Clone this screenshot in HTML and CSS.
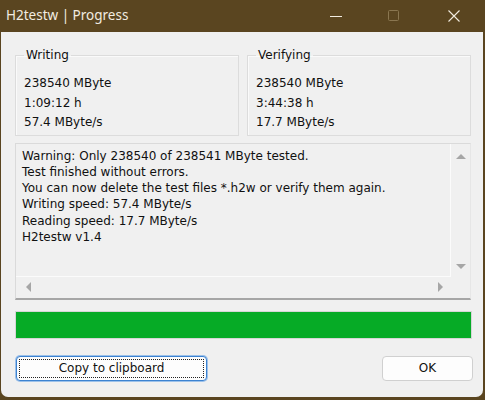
FILE: index.html
```html
<!DOCTYPE html>
<html>
<head>
<meta charset="utf-8">
<link rel="stylesheet" href="styles.css">
</head>
<body>
<div class="window">
  <div class="titlebar">
    <div class="title">H2testw | Progress</div>
    <div class="caption-buttons">
      <span class="cap cap-min"><svg width="14" height="14" viewBox="0 0 14 14"><path d="M1 7.5H13" stroke="#f2ece0" stroke-width="1"/></svg></span>
      <span class="cap cap-max"><svg width="14" height="14" viewBox="0 0 14 14"><rect x="1.5" y="1.5" width="10" height="10" rx="1" fill="none" stroke="#8a7650" stroke-width="1"/></svg></span>
      <span class="cap cap-close"><svg width="14" height="14" viewBox="0 0 14 14"><path d="M1.5 1.5L12.5 12.5M12.5 1.5L1.5 12.5" stroke="#f2ece0" stroke-width="1.1"/></svg></span>
    </div>
  </div>
  <div class="client">
    <div class="groups">
      <fieldset class="group">
        <legend>Writing</legend>
        <div class="line">238540 MByte</div>
        <div class="line">1:09:12 h</div>
        <div class="line">57.4 MByte/s</div>
      </fieldset>
      <fieldset class="group">
        <legend>Verifying</legend>
        <div class="line">238540 MByte</div>
        <div class="line">3:44:38 h</div>
        <div class="line">17.7 MByte/s</div>
      </fieldset>
    </div>
    <div class="log">
      <div class="log-text">
        <div>Warning: Only 238540 of 238541 MByte tested.</div>
        <div>Test finished without errors.</div>
        <div>You can now delete the test files *.h2w or verify them again.</div>
        <div>Writing speed: 57.4 MByte/s</div>
        <div>Reading speed: 17.7 MByte/s</div>
        <div>H2testw v1.4</div>
      </div>
      <div class="vscroll">
        <span class="arrow arrow-up"></span>
        <span class="arrow arrow-down"></span>
      </div>
      <div class="hscroll">
        <span class="arrow arrow-left"></span>
        <span class="arrow arrow-right"></span>
      </div>
      <div class="corner"></div>
    </div>
    <div class="progress"><div class="progress-fill" style="width:100%"></div></div>
    <div class="buttons">
      <button class="btn btn-focus"><span class="focus-ring">Copy to clipboard</span></button>
      <button class="btn btn-ok"><span class="focus-none">OK</span></button>
    </div>
  </div>
</div>
</body>
</html>
```

FILE: styles.css
```css
* { box-sizing: border-box; }
html, body {
  margin: 0;
  padding: 0;
  width: 485px;
  height: 400px;
  overflow: hidden;
  background: #2a2520;
}
.window {
  width: 485px;
  height: 400px;
  background: #5a4520;
  display: flex;
  flex-direction: column;
  font-family: "DejaVu Sans", sans-serif;
  color: #111;
}
.titlebar {
  height: 32px;
  flex: none;
  display: flex;
  align-items: center;
  justify-content: space-between;
}
.title {
  padding-left: 6px;
  font-family: "Noto Sans", sans-serif;
  font-size: 13.5px;
  color: #f2ece0;
  padding-bottom: 2px;
}
.caption-buttons {
  display: flex;
  height: 32px;
  align-items: center;
}
.cap {
  height: 32px;
  display: flex;
  align-items: center;
  justify-content: center;
}
.cap-min { width: 58px; }
.cap-max { width: 58px; }
.cap-close { width: 62px; }
.client {
  flex: 1;
  margin: 0 2px 3px 1px;
  background: #f0f0f0;
  border-radius: 0 0 7px 7px;
  padding: 16px 12px 0 14px;
  display: flex;
  flex-direction: column;
}
.groups {
  display: grid;
  grid-template-columns: 224px 224px;
  column-gap: 8px;
}
.group {
  margin: 0;
  border: 1px solid #dcdcdc;
  box-shadow: inset 1px 1px 0 #fafafa;
  padding: 11px 8px 2px 8px;
  min-width: 0;
  font-size: 12px;
}
.group legend {
  padding: 0 2px;
  margin-left: 0;
  font-size: 12px;
  line-height: 15px;
}
.line {
  line-height: 19.5px;
  white-space: nowrap;
}
.log {
  margin-top: 7px;
  height: 157px;
  width: 456px;
  display: grid;
  grid-template-columns: 1fr 19px;
  grid-template-rows: 1fr 21px;
  border-top: 1px solid #dadada;
  border-left: 1px solid #dadada;
  border-right: 1px solid #e6e6e6;
  border-bottom: 2px solid #a6a6a6;
  font-size: 12px;
}
.log-text {
  padding: 4px 6px;
  line-height: 16.3px;
  white-space: nowrap;
  overflow: hidden;
  border-right: 1px solid #fbfbfb;
  border-bottom: 1px solid #fbfbfb;
}
.vscroll {
  display: flex;
  flex-direction: column;
  justify-content: space-between;
  align-items: center;
  padding: 10px 0 8px;
}
.hscroll {
  display: flex;
  justify-content: space-between;
  align-items: center;
  padding: 0 8px 0 10px;
}
.arrow {
  width: 0;
  height: 0;
  display: block;
}
.arrow-up {
  border-left: 5px solid transparent;
  border-right: 5px solid transparent;
  border-bottom: 5px solid #a6a6a6;
}
.arrow-down {
  border-left: 5px solid transparent;
  border-right: 5px solid transparent;
  border-top: 5px solid #a6a6a6;
}
.arrow-left {
  border-top: 5px solid transparent;
  border-bottom: 5px solid transparent;
  border-right: 5px solid #a6a6a6;
}
.arrow-right {
  border-top: 5px solid transparent;
  border-bottom: 5px solid transparent;
  border-left: 5px solid #a6a6a6;
}
.progress {
  margin-top: 11px;
  height: 28px;
  width: 457px;
  border: 1px solid #d6d6d6;
  background: #e6e6e6;
}
.progress-fill {
  height: 100%;
  background: #06ab26;
}
.buttons {
  margin-top: 17px;
  display: flex;
  justify-content: space-between;
  width: 457px;
  padding-left: 1px;
}
.btn {
  height: 25px;
  background: #fdfdfd;
  border: 1px solid #d0d0d0;
  border-radius: 4px;
  padding: 2px;
  font-family: "DejaVu Sans", sans-serif;
  font-size: 12px;
  color: #111;
  display: flex;
}
.btn-focus {
  width: 191px;
  border: 1px solid #3c82d0;
  box-shadow: 0 0 0 1px #9cc1ea;
}
.btn-ok {
  width: 91px;
  margin-right: -1px;
}
.focus-ring, .focus-none {
  flex: 1;
  display: flex;
  align-items: center;
  justify-content: center;
  border: 1px dotted transparent;
}
.focus-ring {
  border: 1px dotted #222;
}
```
